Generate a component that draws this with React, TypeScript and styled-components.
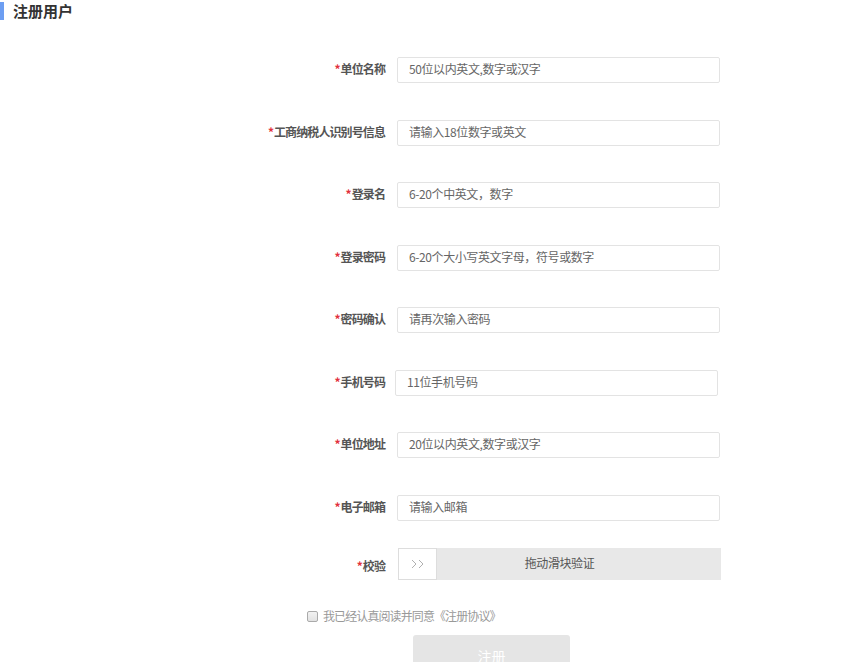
import styled, { createGlobalStyle } from 'styled-components';

const GlobalStyle = createGlobalStyle`
	body {
		margin: 0;
		background: #fff;
		font-family: 'Noto Sans CJK SC', 'Noto Sans', sans-serif;
		color: #333;
	}
`;

const fields = [
	{ label: '单位名称', placeholder: '50位以内英文,数字或汉字' },
	{ label: '工商纳税人识别号信息', placeholder: '请输入18位数字或英文' },
	{ label: '登录名', placeholder: '6-20个中英文，数字' },
	{ label: '登录密码', placeholder: '6-20个大小写英文字母，符号或数字' },
	{ label: '密码确认', placeholder: '请再次输入密码' },
	{ label: '手机号码', placeholder: '11位手机号码', shift: -2 },
	{ label: '单位地址', placeholder: '20位以内英文,数字或汉字' },
	{ label: '电子邮箱', placeholder: '请输入邮箱' },
];

const App = () => {
	return (
		<>
			<GlobalStyle />
			<Page>
				<Title>注册用户</Title>
				<Form>
					{fields.map((f) => (
						<Row key={f.label}>
							<Label>
								<Star>*</Star>
								{f.label}
							</Label>
							<Input $shift={f.shift ?? 0} placeholder={f.placeholder} />
						</Row>
					))}
					<Row $top={27}>
						<Label $drop={3}>
							<Star>*</Star>校验
						</Label>
						<Slider>
							<Handle>
								<svg width="14" height="10" viewBox="0 0 14 10">
									<path
										d="M1 1l4 4-4 4M8 1l4 4-4 4"
										fill="none"
										stroke="#b0b0b0"
										strokeWidth="1"
									/>
								</svg>
							</Handle>
							拖动滑块验证
						</Slider>
					</Row>
				</Form>
				<Agree>
					<Box />
					我已经认真阅读并同意《注册协议》
				</Agree>
				<SubmitRow>
					<Submit>注册</Submit>
				</SubmitRow>
			</Page>
		</>
	);
};

export default App;

const Page = styled.div`
	width: 865px;
	height: 662px;
	overflow: hidden;
`;

const Title = styled.h2`
	margin: 2px 0 0;
	height: 18px;
	line-height: 18px;
	padding-left: 9px;
	border-left: 4px solid #6d9ef2;
	font-size: 15px;
	font-weight: bold;
	color: #333;
`;

const Form = styled.div`
	display: flex;
	flex-direction: column;
	padding-top: 37px;
`;

const Row = styled.div<{ $top?: number }>`
	display: flex;
	align-items: center;
	margin-top: ${(p) => p.$top ?? 36.5}px;

	&:first-child {
		margin-top: 0;
	}
`;

const Label = styled.div<{ $drop?: number }>`
	width: 385px;
	text-align: right;
	font-size: 12px;
	font-weight: bold;
	letter-spacing: -0.9px;
	color: #555;
	margin-right: 12px;
	padding-top: ${(p) => (p.$drop ?? 0) * 2}px;
	padding-bottom: 3px;
`;

const Star = styled.span`
	color: #e2323c;
	letter-spacing: 0;
`;

const Input = styled.input<{ $shift: number }>`
	width: 323px;
	height: 26px;
	box-sizing: border-box;
	border: 1px solid #e3e3e3;
	border-radius: 2px;
	padding: 0 11px 3px;
	margin-left: ${(p) => p.$shift}px;
	font-family: 'Noto Sans CJK SC', 'Noto Sans', sans-serif;
	font-size: 12px;
	letter-spacing: -0.4px;
	outline: none;

	&::placeholder {
		color: #666;
	}
`;

const Slider = styled.div`
	position: relative;
	display: flex;
	align-items: center;
	justify-content: center;
	width: 323px;
	height: 32px;
	box-sizing: border-box;
	padding-bottom: 3px;
	margin-left: 1px;
	background: #e8e8e8;
	font-size: 12px;
	letter-spacing: -0.4px;
	color: #555;
`;

const Handle = styled.div`
	position: absolute;
	left: 0;
	top: 0;
	width: 39px;
	height: 32px;
	box-sizing: border-box;
	border: 1px solid #ddd;
	background: #fff;
	display: flex;
	align-items: center;
	justify-content: center;
`;

const Agree = styled.label`
	display: flex;
	align-items: center;
	margin: 28px 0 0 307px;
	font-size: 12px;
	letter-spacing: -0.9px;
	color: #999;
	height: 16px;
`;

const Box = styled.span`
	width: 11px;
	height: 11px;
	box-sizing: border-box;
	border: 1px solid #aaa;
	border-radius: 2px;
	background: linear-gradient(#f2f2f2, #e2e2e2);
	margin-right: 5px;
	margin-top: 2px;
`;

const SubmitRow = styled.div`
	display: flex;
	padding-left: 413px;
	margin-top: 11px;
`;

const Submit = styled.button`
	width: 157px;
	height: 42px;
	border: none;
	border-radius: 3px;
	background: #e5e5e5;
	color: #fff;
	font-family: 'Noto Sans CJK SC', 'Noto Sans', sans-serif;
	font-size: 14px;
	padding-top: 2px;
`;
